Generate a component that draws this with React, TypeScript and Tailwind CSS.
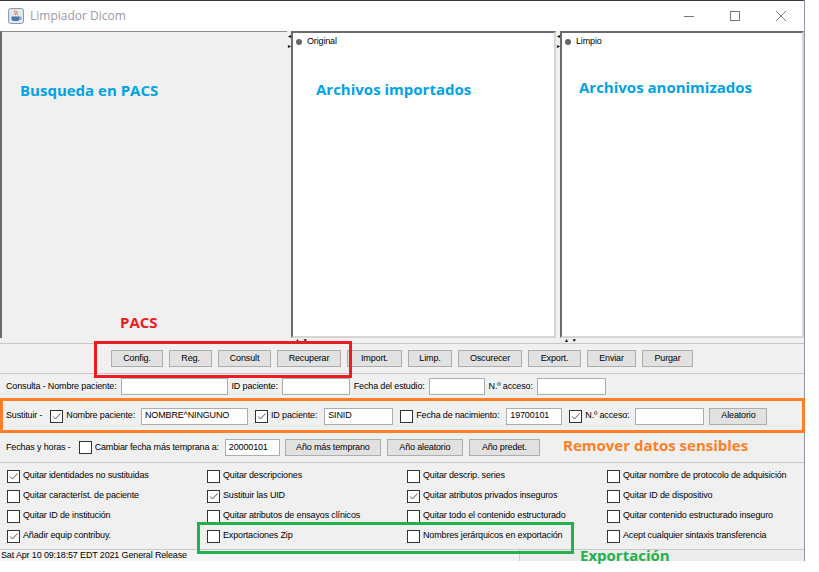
import type { ReactNode } from 'react';

const ui = "font-['Liberation_Sans',Arial,sans-serif] text-[9px] tracking-[-0.15px] text-black";
const note = "font-['Open_Sans',sans-serif] font-bold text-[15px] leading-none tracking-normal";

const Check = ({ checked = false }: { checked?: boolean }) => (
  <span className="flex h-[13px] w-[13px] shrink-0 items-center justify-center border border-[#333] bg-white">
    {checked && (
      <svg viewBox="0 0 11 11" className="h-[11px] w-[11px]">
        <path d="M2 5.5 L4.5 8 L9.5 2.5" fill="none" stroke="#555" strokeWidth="1" />
      </svg>
    )}
  </span>
);

const Btn = ({ label, w }: { label: string; w: string }) => (
  <button
    type="button"
    className={`flex h-[17px] items-center justify-center border border-[#adadad] bg-[#e1e1e1] ${w}`}
  >
    {label}
  </button>
);

const Field = ({ w, value = '' }: { w: string; value?: string }) => (
  <span className={`flex h-[17px] shrink-0 items-center border border-[#abadb3] bg-white pl-[3px] ${w}`}>
    {value}
  </span>
);

const Pane = ({ title, children }: { title?: string; children?: ReactNode }) => (
  <div className="flex flex-1 flex-col">
    <div className="flex-1 border-2 border-t-[#6b6b6b] border-l-[#6b6b6b] border-r-[#d6d6d6] border-b-[#d6d6d6] bg-white">
      {title && (
        <div className="flex items-center gap-[5px] pl-[3px] pt-[2px]">
          <span className="h-[6px] w-[6px] rounded-full bg-[#666]" />
          <span>{title}</span>
        </div>
      )}
      {children}
    </div>
    <div className="flex h-[5px] items-center gap-[3px] pl-[4px] text-[5px] leading-none">
      <span>▲</span>
      <span>▼</span>
    </div>
  </div>
);

const Splitter = () => (
  <div className="flex w-[4px] flex-col items-center gap-[4px] pt-[2px] text-[6px] leading-none">
    <span>◂</span>
    <span>▸</span>
  </div>
);

const options: [string, boolean][] = [
  ['Quitar identidades no sustituidas', true],
  ['Quitar descripciones', false],
  ['Quitar descrip. series', false],
  ['Quitar nombre de protocolo de adquisición', false],
  ['Quitar característ. de paciente', false],
  ['Sustituir las UID', true],
  ['Quitar atributos privados inseguros', true],
  ['Quitar ID de dispositivo', false],
  ['Quitar ID de institución', false],
  ['Quitar atributos de ensayos clínicos', false],
  ['Quitar todo el contenido estructurado', false],
  ['Quitar contenido estructurado inseguro', false],
  ['Añadir equip contribuy.', true],
  ['Exportaciones Zip', false],
  ['Nombres jerárquicos en exportación', false],
  ['Acept cualquier sintaxis transferencia', false],
];

export default function App() {
  return (
    <div className={`relative h-[572px] w-[819px] overflow-hidden bg-white ${ui}`}>
      <div className="flex w-[805px] flex-col border-r border-[#8a96a6]">
        {/* title bar */}
        <div className="flex h-[31px] items-center border-t border-[#3a3a3a] bg-white">
          <svg viewBox="0 0 16 16" className="ml-[8px] h-[16px] w-[16px]">
            <rect x="0.5" y="0.5" width="15" height="15" rx="2" fill="#dfe6ee" stroke="#8a9bb0" />
            <path d="M7 2 C5.5 4 8.5 5 7 7 M9 3 C8 4.5 10 5.5 9 7" fill="none" stroke="#e76f1c" strokeWidth="1" />
            <path d="M3.5 8.5 H11.5 V11 C11.5 12.5 10 13 7.5 13 C5 13 3.5 12.5 3.5 11 Z" fill="#4a74a8" />
            <path d="M11.5 9 C13.5 9 13.5 11.5 11.5 11.5" fill="none" stroke="#4a74a8" strokeWidth="1" />
          </svg>
          <span className="ml-[6px] font-['Open_Sans',sans-serif] text-[12px] tracking-normal text-[#9b99a6]">
            Limpiador Dicom
          </span>
          <div className="ml-auto flex h-full items-center">
            <div className="flex h-full w-[46px] items-center justify-center">
              <span className="h-px w-[10px] bg-[#777]" />
            </div>
            <div className="flex h-full w-[46px] items-center justify-center">
              <span className="h-[10px] w-[10px] border border-[#777]" />
            </div>
            <div className="flex h-full w-[46px] items-center justify-center">
              <svg viewBox="0 0 10 10" className="h-[10px] w-[10px]">
                <path d="M0 0 L10 10 M10 0 L0 10" stroke="#777" strokeWidth="1" />
              </svg>
            </div>
          </div>
        </div>

        {/* split panes */}
        <div className="flex h-[312px] bg-[#f0f0f0]">
          <div className="flex w-[287px] flex-col">
            <div className="flex-1 border-l-2 border-t border-l-[#6b6b6b] border-t-[#8c8c8c]" />
            <div className="h-[5px]" />
          </div>
          <Splitter />
          <Pane title="Original" />
          <Splitter />
          <div className="flex w-[244px] flex-col">
            <Pane title="Limpio" />
          </div>
        </div>

        {/* buttons */}
        <div className="flex h-[31px] items-center justify-center gap-[6px] border-y border-[#c8c8c8] bg-[#f0f0f0]">
          <Btn label="Config." w="w-[52px]" />
          <Btn label="Reg." w="w-[43px]" />
          <Btn label="Consult" w="w-[53px]" />
          <Btn label="Recuperar" w="w-[64px]" />
          <Btn label="Import." w="w-[55px]" />
          <Btn label="Limp." w="w-[44px]" />
          <Btn label="Oscurecer" w="w-[64px]" />
          <Btn label="Export." w="w-[53px]" />
          <Btn label="Enviar" w="w-[49px]" />
          <Btn label="Purgar" w="w-[51px]" />
        </div>

        {/* query */}
        <div className="flex h-[26px] items-center gap-[4px] border-b border-[#c8c8c8] bg-[#f0f0f0] pl-[6px]">
          <span>Consulta - Nombre paciente:</span>
          <Field w="w-[107px]" />
          <span>ID paciente:</span>
          <Field w="w-[68px]" />
          <span>Fecha del estudio:</span>
          <Field w="w-[56px]" />
          <span>N.º acceso:</span>
          <Field w="w-[69px]" />
        </div>

        {/* substitute */}
        <div className="flex h-[33px] items-center border-b border-[#c8c8c8] bg-[#f0f0f0] pl-[6px]">
          <span className="mr-[8px]">Sustituir -</span>
          <Check checked />
          <span className="ml-[3px] mr-[6px]">Nombre paciente:</span>
          <Field w="w-[107px]" value="NOMBRE^NINGUNO" />
          <span className="w-[7px]" />
          <Check checked />
          <span className="ml-[3px] mr-[7px]">ID paciente:</span>
          <Field w="w-[69px]" value="SINID" />
          <span className="w-[7px]" />
          <Check />
          <span className="ml-[3px] mr-[7px]">Fecha de nacimiento:</span>
          <Field w="w-[56px]" value="19700101" />
          <span className="w-[7px]" />
          <Check checked />
          <span className="ml-[3px] mr-[6px]">N.º acceso:</span>
          <Field w="w-[69px]" />
          <span className="w-[5px]" />
          <Btn label="Aleatorio" w="w-[58px]" />
        </div>

        {/* dates */}
        <div className="flex h-[30px] items-center border-b border-[#c8c8c8] bg-[#f0f0f0] pl-[6px]">
          <span className="mr-[8px]">Fechas y horas -</span>
          <Check />
          <span className="ml-[3px] mr-[6px]">Cambiar fecha más temprana a:</span>
          <Field w="w-[55px]" value="20000101" />
          <div className="ml-[5px] flex gap-[6px]">
            <Btn label="Año más temprano" w="w-[96px]" />
            <Btn label="Año aleatorio" w="w-[76px]" />
            <Btn label="Año predet." w="w-[71px]" />
          </div>
        </div>

        {/* options */}
        <div className="grid grid-cols-[200px_200px_200px_200px] bg-[#f0f0f0] py-[3px] pl-[7px]">
          {options.map(([label, on]) => (
            <div key={label} className="flex h-[20px] items-center gap-[3px]">
              <Check checked={on} />
              <span>{label}</span>
            </div>
          ))}
        </div>

        {/* status */}
        <div className="flex h-[12px] items-center border-t border-[#c8c8c8] bg-[#f4f4f4]">
          <span className="pl-[1px]">Sat Apr 10 09:18:57 EDT 2021 General Release</span>
          <span className="ml-auto h-full w-[285px] border-l border-[#d0d0d0] bg-[#ececec]" />
        </div>
      </div>

      {/* annotations */}
      <span className={`absolute left-[20px] top-[83px] text-[#00a2e8] ${note}`}>Busqueda en PACS</span>
      <span className={`absolute left-[316px] top-[82px] text-[#00a2e8] ${note}`}>Archivos importados</span>
      <span className={`absolute left-[579px] top-[80px] text-[#00a2e8] ${note}`}>Archivos anonimizados</span>
      <span className={`absolute left-[120px] top-[315px] text-[#ed1c24] ${note}`}>PACS</span>
      <span className={`absolute left-[563px] top-[438px] text-[#ff7f27] ${note}`}>Remover datos sensibles</span>
      <span className={`absolute left-[580px] top-[548px] text-[#22b14c] ${note}`}>Exportación</span>
      <div className="absolute left-[94px] top-[341px] h-[37px] w-[258px] border-[3px] border-[#ed1c24]" />
      <div className="absolute left-0 top-[398px] h-[35px] w-[805px] border-[3px] border-[#ff7f27]" />
      <div className="absolute left-[197px] top-[522px] h-[32px] w-[377px] border-[3px] border-[#22b14c]" />
    </div>
  );
}
